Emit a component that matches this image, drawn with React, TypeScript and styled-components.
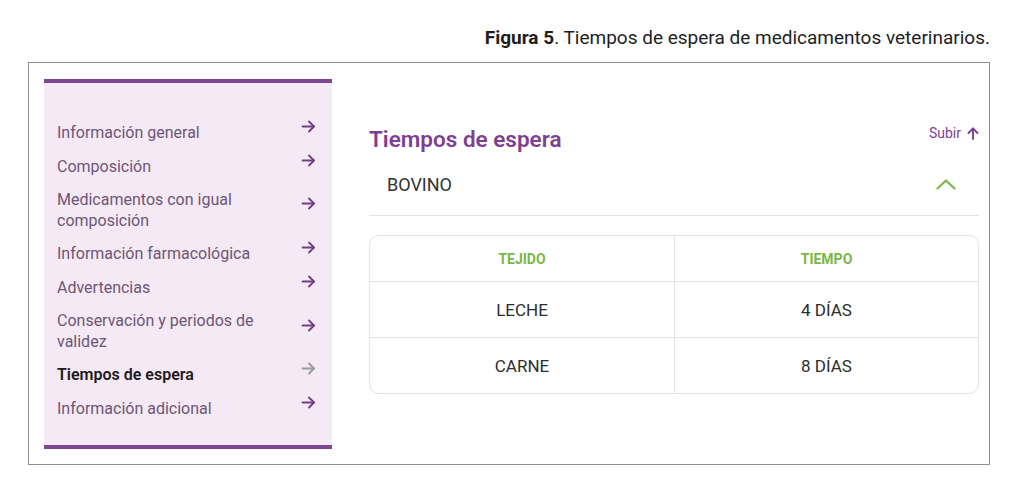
import React from "react";
import styled, { createGlobalStyle } from "styled-components";

const GlobalStyle = createGlobalStyle`
  body {
    margin: 0;
    background: #ffffff;
    font-family: Roboto, "Liberation Sans", sans-serif;
  }
`;

const Page = styled.div`
  width: 1024px;
  height: 498px;
  padding-top: 27px;
  box-sizing: border-box;
`;

const Caption = styled.p`
  margin: 0 34px 0 0;
  text-align: right;
  font-size: 19px;
  line-height: 22px;
  color: #1e1e1e;
  b {
    font-weight: 700;
  }
`;

const Frame = styled.div`
  margin: 13px 0 0 28px;
  width: 962px;
  height: 403px;
  box-sizing: border-box;
  border: 1px solid #8f8f8f;
  padding: 16px 10px 15px 15px;
  display: flex;
  gap: 37px;
`;

const Sidebar = styled.nav`
  flex: 0 0 288px;
  background: #f4e9f4;
  border-top: 4px solid #7d4692;
  border-bottom: 4px solid #7d4692;
  padding: 33px 16px 18px 13px;
  box-sizing: border-box;
  display: flex;
  flex-direction: column;
`;

const MenuItem = styled.div<{ $active?: boolean }>`
  display: flex;
  align-items: center;
  justify-content: space-between;
  padding: 6.2px 0;
  font-size: 16px;
  line-height: 21px;
  color: ${(p) => (p.$active ? "#1f1a20" : "#6e5676")};
  font-weight: ${(p) => (p.$active ? 600 : 400)};
`;

const MenuLabel = styled.span`
  max-width: 220px;
`;

const ArrowBox = styled.span<{ $active?: boolean }>`
  display: flex;
  margin-top: -12px;
  color: ${(p) => (p.$active ? "#9a9a9a" : "#6f3f84")};
`;

const Main = styled.section`
  flex: 1;
  padding-top: 46px;
  display: flex;
  flex-direction: column;
`;

const Header = styled.div`
  display: flex;
  justify-content: space-between;
  align-items: flex-start;
`;

const Title = styled.h2`
  margin: 0;
  font-size: 22.5px;
  line-height: 28px;
  font-weight: 600;
  color: #7e3f93;
`;

const Subir = styled.a`
  display: flex;
  align-items: center;
  gap: 6px;
  margin-top: 0;
  font-size: 14px;
  line-height: 16px;
  color: #7e3f93;
`;

const AccordionRow = styled.div`
  display: flex;
  align-items: center;
  justify-content: space-between;
  height: 62px;
  padding: 0 23px 0 18px;
  border-bottom: 1px solid #e3e3e3;
  font-size: 18px;
  color: #333333;
`;

const Table = styled.div`
  margin-top: 19px;
  border: 1px solid #e3e3e3;
  border-radius: 10px;
  display: grid;
  grid-template-columns: 304px 1fr;
  overflow: hidden;
`;

const Cell = styled.div<{ $head?: boolean; $last?: boolean; $right?: boolean }>`
  height: ${(p) => (p.$head ? "45px" : "55px")};
  display: flex;
  align-items: center;
  justify-content: center;
  border-left: ${(p) => (p.$right ? "1px solid #e3e3e3" : "none")};
  border-bottom: ${(p) => (p.$last ? "none" : "1px solid #e3e3e3")};
  font-size: ${(p) => (p.$head ? "14px" : "17px")};
  font-weight: ${(p) => (p.$head ? 700 : 400)};
  color: ${(p) => (p.$head ? "#7ab648" : "#2d2d2d")};
`;

function RightArrow() {
  return (
    <svg width="15" height="13" viewBox="0 0 15 13" fill="none" stroke="currentColor" strokeWidth="1.8" strokeLinecap="round" strokeLinejoin="round">
      <path d="M1.5 6.5H13" />
      <path d="M8 1.5L13 6.5L8 11.5" />
    </svg>
  );
}

function UpArrow() {
  return (
    <svg width="12" height="13" viewBox="0 0 12 13" fill="none" stroke="currentColor" strokeWidth="1.9" strokeLinecap="round" strokeLinejoin="round">
      <path d="M6 12V1.5" />
      <path d="M1.5 6L6 1.5L10.5 6" />
    </svg>
  );
}

function ChevronUp() {
  return (
    <svg width="20" height="11" viewBox="0 0 20 11" fill="none" stroke="#7ab648" strokeWidth="2.2" strokeLinecap="round" strokeLinejoin="round">
      <path d="M1.5 9.5L10 1.5L18.5 9.5" />
    </svg>
  );
}

const menu = [
  "Información general",
  "Composición",
  "Medicamentos con igual composición",
  "Información farmacológica",
  "Advertencias",
  "Conservación y periodos de validez",
  "Tiempos de espera",
  "Información adicional",
];

const rows = [
  ["LECHE", "4 DÍAS"],
  ["CARNE", "8 DÍAS"],
];

export default function App() {
  return (
    <Page>
      <GlobalStyle />
      <Caption>
        <b>Figura 5</b>. Tiempos de espera de medicamentos veterinarios.
      </Caption>
      <Frame>
        <Sidebar>
          {menu.map((label) => {
            const active = label === "Tiempos de espera";
            return (
              <MenuItem key={label} $active={active}>
                <MenuLabel>{label}</MenuLabel>
                <ArrowBox $active={active}>
                  <RightArrow />
                </ArrowBox>
              </MenuItem>
            );
          })}
        </Sidebar>
        <Main>
          <Header>
            <Title>Tiempos de espera</Title>
            <Subir>
              Subir <UpArrow />
            </Subir>
          </Header>
          <AccordionRow>
            <span>BOVINO</span>
            <ChevronUp />
          </AccordionRow>
          <Table>
            <Cell $head>TEJIDO</Cell>
            <Cell $head $right>
              TIEMPO
            </Cell>
            {rows.map(([tejido, tiempo], idx) => (
              <React.Fragment key={tejido}>
                <Cell $last={idx === rows.length - 1}>{tejido}</Cell>
                <Cell $last={idx === rows.length - 1} $right>
                  {tiempo}
                </Cell>
              </React.Fragment>
            ))}
          </Table>
        </Main>
      </Frame>
    </Page>
  );
}
